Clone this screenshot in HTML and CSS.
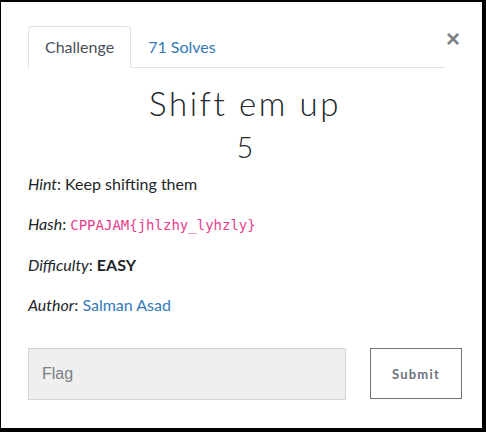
FILE: index.html
```html
<!DOCTYPE html>
<html>
<head>
<meta charset="utf-8">
<link rel="stylesheet" href="styles.css">
</head>
<body>
<div class="modal">
  <div class="top">
    <ul class="tabs">
      <li class="tab active">Challenge</li>
      <li class="tab link">71 Solves</li>
    </ul>
    <button class="close" type="button">&times;</button>
  </div>
  <div class="body">
    <h2 class="title">Shift em up</h2>
    <h3 class="value">5</h3>
    <p class="row"><em>Hint</em>: Keep shifting them</p>
    <p class="row"><em>Hash</em>: <code>CPPAJAM{jhlzhy_lyhzly}</code></p>
    <p class="row"><em>Difficulty</em>: <strong>EASY</strong></p>
    <p class="row"><em>Author</em>: <a class="author">Salman Asad</a></p>
    <form class="flag-form">
      <input class="flag" type="text" placeholder="Flag">
      <button class="submit" type="button">Submit</button>
    </form>
  </div>
</div>
</body>
</html>
```
FILE: styles.css
```css
html, body {
  margin: 0;
  padding: 0;
  background: #000;
}
body {
  padding: 2px 4px 4px 1px;
  font-family: Lato, "Liberation Sans", sans-serif;
  color: #212529;
}
.modal {
  background: #fff;
  height: 426px;
  box-sizing: border-box;
  padding: 24px 20px 0 27px;
}
.top {
  display: flex;
  align-items: flex-start;
}
.tabs {
  flex: 1;
  display: flex;
  list-style: none;
  margin: 0;
  padding: 0;
  border-bottom: 1px solid #dee2e6;
  height: 41px;
}
.tab {
  font-size: 16px;
  line-height: 24px;
  padding: 8px 16px;
  border: 1px solid transparent;
  border-radius: 4px 4px 0 0;
  margin-bottom: -1px;
}
.tab.active {
  color: #495057;
  border-color: #dee2e6 #dee2e6 #fff;
  background: #fff;
}
.tab.link {
  color: #337ab7;
}
.close {
  border: 0;
  background: none;
  padding: 0;
  margin: 1px 2px 0 1px;
  font-family: "Liberation Sans", Arial, sans-serif;
  font-size: 24px;
  line-height: 24px;
  font-weight: 700;
  color: #000;
  opacity: .5;
}
.body {
  padding: 0;
}
.title {
  margin: 16px 0 0;
  text-align: center;
  font-weight: 300;
  font-size: 33px;
  line-height: 38px;
  letter-spacing: 2.6px;
  color: #212529;
}
.value {
  margin: 8px 0 8px;
  text-align: center;
  font-weight: 300;
  font-size: 29px;
  line-height: 34px;
  color: #212529;
}
.row {
  margin: 0 0 16px;
  font-size: 16px;
  line-height: 24px;
}
code {
  font-family: "DejaVu Sans Mono", monospace;
  font-size: 14px;
  color: #e83e8c;
}
strong {
  font-weight: 700;
}
.author {
  color: #337ab7;
  text-decoration: none;
}
.flag-form {
  display: flex;
  justify-content: space-between;
  margin-top: 31px;
}
.flag {
  width: 318px;
  height: 52px;
  box-sizing: border-box;
  background: #efefef;
  border: 1px solid #ced4da;
  padding: 0 13px;
  font-family: "Liberation Sans", Arial, sans-serif;
  font-size: 16px;
  color: #495057;
  margin: 0;
}
.flag::placeholder {
  color: #7b8085;
}
.submit {
  width: 92px;
  height: 51px;
  box-sizing: border-box;
  background: #fff;
  border: 1px solid #6c757d;
  font-family: Lato, sans-serif;
  font-weight: 700;
  font-size: 13px;
  letter-spacing: 1.2px;
  color: #6c757d;
  padding: 0;
  margin: 0;
}
```
